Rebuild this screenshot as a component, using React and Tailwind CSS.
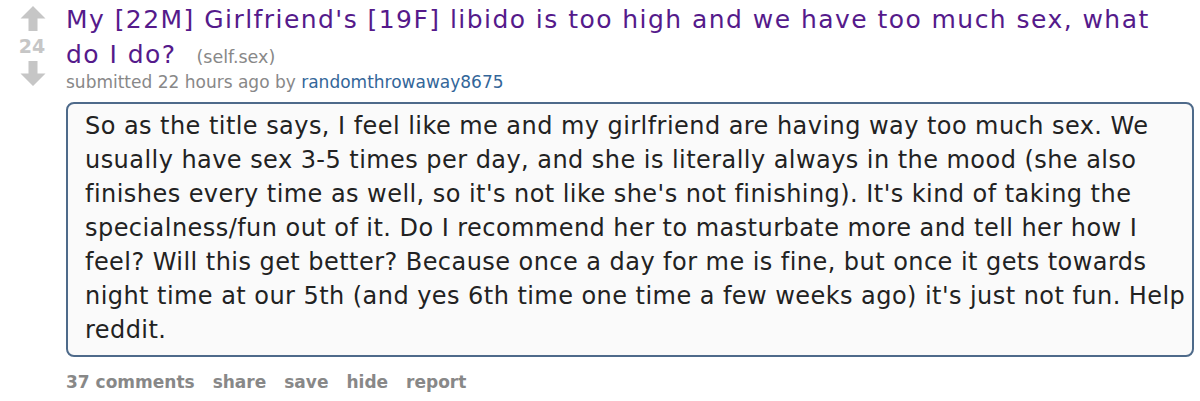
import React from "react";

function Arrow({ down }) {
  return (
    <svg width="26" height="25" viewBox="0 0 26 25" className={down ? "rotate-180" : ""}>
      <path d="M13 0 L25.5 12.5 L17.5 12.5 L17.5 25 L8.5 25 L8.5 12.5 L0.5 12.5 Z" fill="#c6c6c6" />
    </svg>
  );
}

export default function App() {
  return (
    <div className="w-[1200px] h-[401px] bg-white overflow-hidden" style={{ fontFamily: '"DejaVu Sans", Verdana, sans-serif' }}>
      <div className="flex">
        <div className="w-[66px] flex flex-col items-center pt-[6px] pr-[1px]">
          <Arrow />
          <div className="text-[19px] font-bold text-[#c6c6c6] leading-[30px] -ml-[1px]">24</div>
          <Arrow down />
        </div>
        <div className="flex-1 pt-[2px]">
          <div className="text-[25px] leading-[35px] tracking-[1.45px] text-[#551a8b] pr-[30px]">
            My [22M] Girlfriend's [19F] libido is too high and we have too much sex, what do I do?
            <span className="text-[17.5px] leading-[20px] tracking-normal text-[#888] ml-[20px]">(self.sex)</span>
          </div>
          <div className="text-[17px] leading-[20px] text-[#888]">
            submitted 22 hours ago by <span className="text-[#369]">randomthrowaway8675</span>
          </div>
        </div>
      </div>
      <div className="ml-[66px] mr-[6px] mt-[10px] border-2 border-[#4e6a8a] rounded-[8px] bg-[#fafafa] pl-[17px] pr-[4px] pt-[5px] h-[255px]">
        <p className="text-[24px] leading-[34px] tracking-[0.45px] text-[#222]">
          So as the title says, I feel like me and my girlfriend are having way too much sex. We usually have sex 3-5 times per day, and she is literally always in the mood (she also finishes every time as well, so it's not like she's not finishing). It's kind of taking the specialness/fun out of it. Do I recommend her to masturbate more and tell her how I feel? Will this get better? Because once a day for me is fine, but once it gets towards night time at our 5th (and yes 6th time one time a few weeks ago) it's just not fun. Help reddit.
        </p>
      </div>
      <div className="ml-[66px] mt-[13px] flex gap-[18px] text-[17px] font-bold text-[#888] leading-[24px]">
        <span>37 comments</span>
        <span>share</span>
        <span>save</span>
        <span>hide</span>
        <span>report</span>
      </div>
    </div>
  );
}
